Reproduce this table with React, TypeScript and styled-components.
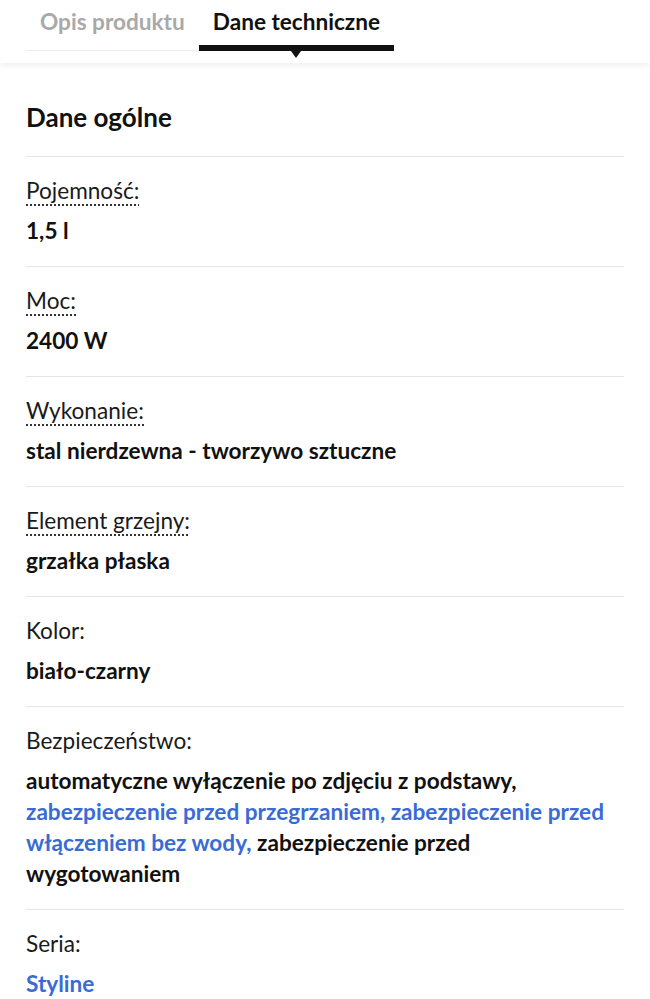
import React from 'react';
import styled, { createGlobalStyle } from 'styled-components';

const GlobalStyle = createGlobalStyle`
  body {
    margin: 0;
    background: #ffffff;
    font-family: Lato, "Open Sans", Arial, sans-serif;
    color: #1a1a1a;
  }
`;

const Page = styled.div`
  width: 650px;
  min-height: 999px;
  background: #ffffff;
`;

const Header = styled.div`
  height: 63px;
  padding: 0 26px;
  background: #ffffff;
  box-shadow: 0 3px 6px rgba(0, 0, 0, 0.06);
  position: relative;
  z-index: 1;
`;

const TabList = styled.div`
  display: inline-flex;
  height: 51px;
  border-bottom: 1px solid #ececec;
  box-sizing: border-box;
`;

const Tab = styled.div<{ $active?: boolean }>`
  position: relative;
  padding: 9px 14px 0;
  font-size: 22.6px;
  line-height: 26px;
  font-weight: 700;
  color: ${(p) => (p.$active ? '#111111' : '#a9a9a9')};
  white-space: nowrap;

  ${(p) =>
    p.$active &&
    `
    &::after {
      content: '';
      position: absolute;
      left: 0;
      right: 0;
      bottom: -1px;
      height: 6px;
      background: #111111;
    }
    &::before {
      content: '';
      position: absolute;
      left: 50%;
      bottom: -8px;
      margin-left: -5px;
      border-left: 5px solid transparent;
      border-right: 5px solid transparent;
      border-top: 7px solid #111111;
    }
  `}
`;

const Content = styled.div`
  padding: 39px 26px 0;
`;

const SectionTitle = styled.h2`
  margin: 0;
  padding-bottom: 24px;
  font-size: 26px;
  line-height: 30px;
  font-weight: 700;
  color: #111111;
  border-bottom: 1px solid #e6e6e6;
`;

const Row = styled.div`
  padding: 22px 0 20px;
  border-bottom: 1px solid #e6e6e6;

  &:last-child {
    border-bottom: none;
  }
`;

const Label = styled.div<{ $hint?: boolean }>`
  display: inline-block;
  font-size: 22.6px;
  line-height: 24px;
  font-weight: 400;
  color: #1a1a1a;
  padding-bottom: 3px;
  background-image: ${(p) =>
    p.$hint ? 'repeating-linear-gradient(90deg, #333 0 2px, transparent 2px 4px)' : 'none'};
  background-size: 100% 2px;
  background-repeat: no-repeat;
  background-position: left bottom;
`;

const Value = styled.div`
  margin-top: 9px;
  font-size: 22.6px;
  line-height: 31px;
  font-weight: 700;
  color: #111111;
`;

const Link = styled.span`
  color: #3a6bd5;
`;

type Spec = { label: string; hint?: boolean; value: React.ReactNode };

const specs: Spec[] = [
  { label: 'Pojemność:', hint: true, value: '1,5 l' },
  { label: 'Moc:', hint: true, value: '2400 W' },
  { label: 'Wykonanie:', hint: true, value: 'stal nierdzewna - tworzywo sztuczne' },
  { label: 'Element grzejny:', hint: true, value: 'grzałka płaska' },
  { label: 'Kolor:', value: 'biało-czarny' },
  {
    label: 'Bezpieczeństwo:',
    value: (
      <>
        automatyczne wyłączenie po zdjęciu z podstawy,{' '}
        <Link>zabezpieczenie przed przegrzaniem, zabezpieczenie przed włączeniem bez wody,</Link>{' '}
        zabezpieczenie przed wygotowaniem
      </>
    ),
  },
  { label: 'Seria:', value: <Link>Styline</Link> },
];

const App: React.FC = () => {
  return (
    <Page>
      <GlobalStyle />
      <Header>
        <TabList>
          <Tab>Opis produktu</Tab>
          <Tab $active>Dane techniczne</Tab>
        </TabList>
      </Header>
      <Content>
        <SectionTitle>Dane ogólne</SectionTitle>
        {specs.map((s) => (
          <Row key={s.label}>
            <Label $hint={s.hint}>{s.label}</Label>
            <Value>{s.value}</Value>
          </Row>
        ))}
      </Content>
    </Page>
  );
};

export default App;
